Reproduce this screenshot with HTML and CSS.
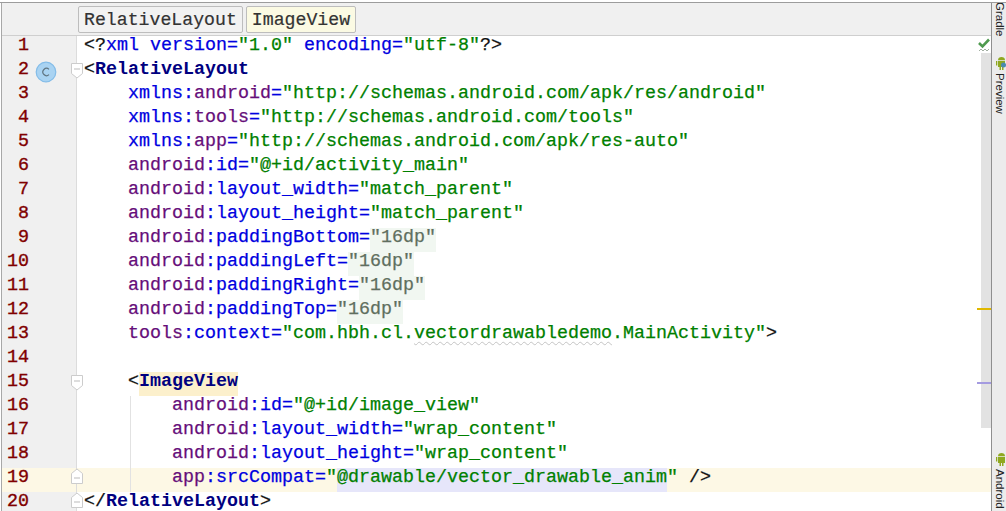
FILE: index.html
```html
<!DOCTYPE html>
<html lang="en">
<head>
<meta charset="utf-8">
<title>activity_main.xml</title>
<link rel="stylesheet" href="styles.css">
</head>
<body>
<div class="window">
  <main class="editor">
    <nav class="crumbs">
      <span class="crumb">RelativeLayout</span>
      <span class="crumb current">ImageView</span>
    </nav>
    <div class="lines">
      <div class="line"><span class="gutter">1</span><code class="code"><i class="p">&lt;?</i><i class="a">xml</i> <i class="a">version</i><i class="a">=</i><i class="s">"1.0"</i> <i class="a">encoding</i><i class="a">=</i><i class="s">"utf-8"</i><i class="p">?&gt;</i></code></div>
      <div class="line"><span class="gutter">2<svg class="badge" viewBox="0 0 22 22"><circle cx="11" cy="11" r="9.8" fill="#a9d3f2" stroke="#83bce8" stroke-width="1.2"/><path d="M14 8.400a3.600 3.600 0 1 0 0 5.200" fill="none" stroke="#5f7480" stroke-width="1.2"/></svg><svg class="fold" viewBox="0 0 12 16"><path d="M.5.5h11v10L6 15 .5 10.500z" fill="#fff" stroke="#ccc"/><path d="M3 6h6" stroke="#bbb"/></svg></span><code class="code"><i class="p">&lt;</i><b class="t">RelativeLayout</b></code></div>
      <div class="line"><span class="gutter">3</span><code class="code">    <i class="a">xmlns:</i><i class="n">android</i><i class="a">=</i><i class="s">"http://schemas.android.com/apk/res/android"</i></code></div>
      <div class="line"><span class="gutter">4</span><code class="code">    <i class="a">xmlns:</i><i class="n">tools</i><i class="a">=</i><i class="s">"http://schemas.android.com/tools"</i></code></div>
      <div class="line"><span class="gutter">5</span><code class="code">    <i class="a">xmlns:</i><i class="n">app</i><i class="a">=</i><i class="s">"http://schemas.android.com/apk/res-auto"</i></code></div>
      <div class="line"><span class="gutter">6</span><code class="code">    <i class="n">android</i><i class="a">:id=</i><i class="s">"@+id/activity_main"</i></code></div>
      <div class="line"><span class="gutter">7</span><code class="code">    <i class="n">android</i><i class="a">:layout_width=</i><i class="s">"match_parent"</i></code></div>
      <div class="line"><span class="gutter">8</span><code class="code">    <i class="n">android</i><i class="a">:layout_height=</i><i class="s">"match_parent"</i></code></div>
      <div class="line"><span class="gutter">9</span><code class="code">    <i class="n">android</i><i class="a">:paddingBottom=</i><i class="d">"16dp"</i></code></div>
      <div class="line"><span class="gutter">10</span><code class="code">    <i class="n">android</i><i class="a">:paddingLeft=</i><i class="d">"16dp"</i></code></div>
      <div class="line"><span class="gutter">11</span><code class="code">    <i class="n">android</i><i class="a">:paddingRight=</i><i class="d">"16dp"</i></code></div>
      <div class="line"><span class="gutter">12</span><code class="code">    <i class="n">android</i><i class="a">:paddingTop=</i><i class="d">"16dp"</i></code></div>
      <div class="line"><span class="gutter">13</span><code class="code">    <i class="n">tools</i><i class="a">:context=</i><i class="s">"com.hbh.cl.<span class="typo">vectordrawabledemo</span>.MainActivity"</i><i class="p">&gt;</i></code></div>
      <div class="line"><span class="gutter">14</span><code class="code"></code></div>
      <div class="line"><span class="gutter">15<svg class="fold" viewBox="0 0 12 16"><path d="M.5.5h11v10L6 15 .5 10.500z" fill="#fff" stroke="#ccc"/><path d="M3 6h6" stroke="#bbb"/></svg></span><code class="code">    <i class="p">&lt;</i><b class="t match">ImageView</b></code></div>
      <div class="line"><span class="gutter">16</span><code class="code guide">        <i class="n">android</i><i class="a">:id=</i><i class="s">"@+id/image_view"</i></code></div>
      <div class="line"><span class="gutter">17</span><code class="code guide">        <i class="n">android</i><i class="a">:layout_width=</i><i class="s">"wrap_content"</i></code></div>
      <div class="line"><span class="gutter">18</span><code class="code guide">        <i class="n">android</i><i class="a">:layout_height=</i><i class="s">"wrap_content"</i></code></div>
      <div class="line caret"><span class="gutter">19<svg class="fold up" viewBox="0 0 12 16"><path d="M.5 15.500h11v-10L6 1 .5 5.500z" fill="#fff" stroke="#ccc"/><path d="M3 10h6" stroke="#bbb"/></svg></span><code class="code guide">        <i class="n">app</i><i class="a">:srcCompat=</i><i class="s">"<span class="ref">@drawable/vector_drawable_anim</span>"</i> <i class="p">/&gt;</i></code></div>
      <div class="line"><span class="gutter">20<svg class="fold up" viewBox="0 0 12 16"><path d="M.5 15.500h11v-10L6 1 .5 5.500z" fill="#fff" stroke="#ccc"/><path d="M3 10h6" stroke="#bbb"/></svg></span><code class="code"><i class="p">&lt;/</i><b class="t">RelativeLayout</b><i class="p">&gt;</i></code></div>
    </div>
    <aside class="marks">
      <svg class="check" viewBox="0 0 12 15"><path d="M1 5l3.500 3.500L11 1.500" fill="none" stroke="#4f9a4f" stroke-width="2.600"/><path d="M1 13l2-2 2 2 2-2 2 2 2-2" fill="none" stroke="#8a9a8a" stroke-width=".8"/></svg>
      <span class="mark warn"></span>
      <span class="mark info"></span>
    </aside>
  </main>
  <aside class="tools">
    <span class="tool gradle">Gradle</span>
    <svg class="droid" viewBox="0 0 10 14"><path d="M2 5h7v6H7.500v3H6v-3H5v3H3.500v-3H2zM0 5h1.300v4.500H0zM2 4.300C2 2 3.500 1 5.500 1S9 2 9 4.300z" fill="#8fa820"/><circle cx="7.500" cy="9" r="2.500" fill="#4a8ab0"/></svg>
    <span class="tool">Preview</span>
    <span class="spacer"></span>
    <svg class="droid low" viewBox="0 0 10 14"><path d="M2 5h7v6H7.500v3H6v-3H5v3H3.500v-3H2zM0 5h1.300v4.500H0zM2 4.300C2 2 3.500 1 5.500 1S9 2 9 4.300z" fill="#8fa820"/></svg>
    <span class="tool">Android</span>
  </aside>
</div>
</body>
</html>
```
FILE: styles.css
```css
* { box-sizing: border-box; }
html, body { margin: 0; height: 100%; overflow: hidden; background: #fff; }
body { padding-top: 2px; }
.window {
  display: flex;
  height: 509px;
  padding-left: 1px;
  border-top: 1px solid #9c9c9c;
  background: #fff;
  overflow: hidden;
}
.editor {
  position: relative;
  width: 991px;
  height: 508px;
  overflow: hidden;
  border-left: 1px solid #a8a8a8;
  border-right: 1px solid #8f8f8f;
  flex: none;
}
.crumbs {
  display: flex;
  gap: 3px;
  height: 33px;
  padding: 3px 0 0 76px;
  background: #f0f0f0;
  border-bottom: 1px solid #cfcfcf;
}
.crumb {
  height: 27px;
  padding: 0 5px;
  border: 1px solid #bdbdbd;
  border-radius: 2px;
  background: #f2f2f2;
  color: #333;
  font: 18.2px/26px "Liberation Mono", monospace;
  -webkit-text-stroke: .2px #333;
}
.current { background: #fbfae3; }
.lines { display: flex; flex-direction: column; }
.line { display: flex; height: 24px; flex: none; }
.gutter {
  position: relative;
  flex: none;
  width: 75px;
  padding-right: 47px;
  background: #f0f0f0;
  border-right: 1px solid #dcdcdc;
  color: #800000;
  text-align: right;
  font: 18.33px/20px "Liberation Mono", monospace;
  -webkit-text-stroke: .35px #800000;
}
.badge {
  position: absolute;
  left: 33px;
  top: 1px;
  width: 22px;
  height: 22px;
}
.fold {
  position: absolute;
  left: 69px;
  top: 3px;
  width: 12px;
  height: 16px;
}
.fold.up { top: 0; }
.caret, .caret .gutter { background: #fdf8e5; }
.code {
  position: relative;
  flex: 1;
  display: block;
  height: 24px;
  padding-left: 7px;
  white-space: pre;
  font: 18.33px/20px "Liberation Mono", monospace;
  -webkit-text-stroke: .25px currentColor;
}
.guide::before {
  content: "";
  position: absolute;
  left: 53px;
  top: 0;
  bottom: 0;
  border-left: 1px solid #e2e2e2;
}
.code i { font-style: normal; }
.p { color: #111; }
.a { color: #0000e0; }
.n { color: #660e7a; }
.s { color: #008000; }
.t { color: #000080; font-weight: bold; -webkit-text-stroke: 0; }
.d {
  display: inline-block;
  height: 24px;
  vertical-align: top;
  color: #5f6f5f;
  background: #f1f7f1;
}
.match {
  display: inline-block;
  height: 24px;
  vertical-align: top;
  background: #fcf0cc;
}
.ref {
  display: inline-block;
  height: 24px;
  vertical-align: top;
  background: #e6e6fa;
}
.typo {
  text-decoration: underline wavy #c4c4c4 1px;
  text-underline-offset: 3px;
  text-decoration-skip-ink: none;
}
.marks {
  position: absolute;
  right: 0;
  top: 33px;
  width: 14px;
  height: 392px;
  background: linear-gradient(to bottom, #fff 17px, #e2e2e2 17px) 4px 0 / 10px 100% no-repeat;
}
.check {
  position: absolute;
  left: 1px;
  top: 2px;
  width: 12px;
  height: 15px;
}
.mark { position: absolute; right: 0; width: 14px; height: 2px; }
.warn { top: 272px; background: #e0b800; }
.info { top: 346px; background: #a49be0; }
.tools {
  display: flex;
  flex-direction: column;
  align-items: flex-end;
  flex: none;
  width: 14px;
  height: 512px;
  margin-top: -3px;
  overflow: hidden;
  background: #ececec;
}
.tool {
  writing-mode: vertical-rl;
  color: #222;
  font: 11.500px/12px "Liberation Sans", sans-serif;
  flex: none;
}
.gradle { margin-top: 2px; }
.droid {
  width: 10px;
  height: 14px;
  flex: none;
  margin: 19px 0 3px;
}
.spacer { height: 339px; flex: none; }
.droid.low { margin-top: 0; }
```
